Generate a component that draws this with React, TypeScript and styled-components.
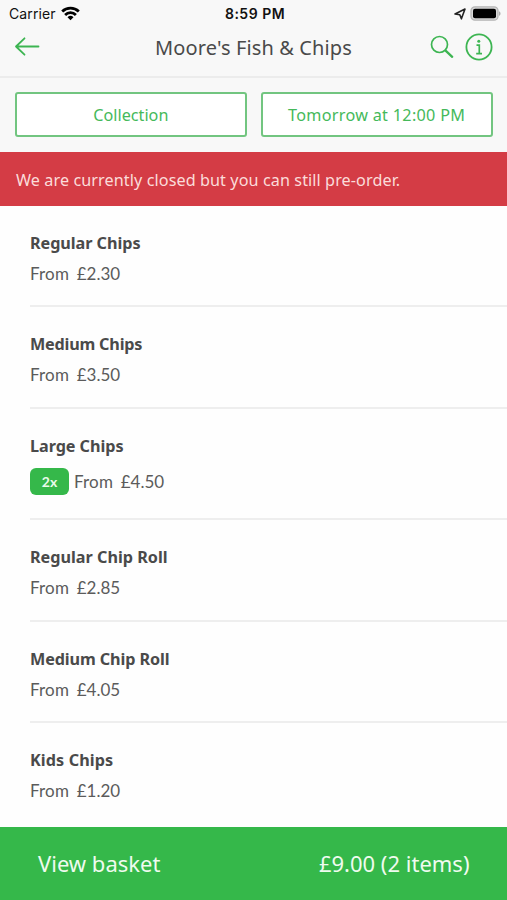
import React from 'react';
import styled, { createGlobalStyle } from 'styled-components';

const green = '#35b84a';
const ink = '#4a4a4a';

const GlobalStyle = createGlobalStyle`
  * { box-sizing: border-box; }
  body {
    margin: 0;
    background: #fefefe;
    color: ${ink};
    font-family: 'Noto Sans', sans-serif;
  }
  button {
    margin: 0;
    padding: 0;
    font: inherit;
    cursor: pointer;
  }
`;

const Screen = styled.div`
  display: flex;
  flex-direction: column;
  width: 507px;
  height: 900px;
  overflow: hidden;
`;

const StatusBar = styled.div`
  display: grid;
  grid-template-columns: 1fr auto 1fr;
  align-items: center;
  height: 27px;
  padding: 0 6px 0 9px;
  background: #f8f8f8;
  color: #111;
  font-family: Inter, sans-serif;
  font-size: 14px;
  line-height: 27px;
`;

const Carrier = styled.div`
  display: flex;
  align-items: center;
  gap: 5px;
  letter-spacing: 0.1px;
`;

const Clock = styled.div`
  font-weight: 600;
  letter-spacing: 0.5px;
`;

const Indicators = styled.div`
  display: flex;
  align-items: center;
  justify-content: flex-end;
  gap: 4px;
`;

const NavBar = styled.header`
  display: grid;
  grid-template-columns: 1fr auto 1fr;
  align-items: center;
  height: 51px;
  padding: 0 14px;
  padding-bottom: 9px;
  background: #f8f8f8;
  border-bottom: 2px solid #ececec;
`;

const Title = styled.h1`
  margin: 0;
  padding-top: 2px;
  font-size: 20px;
  font-weight: 400;
  line-height: 28px;
  letter-spacing: 0.12px;
`;

const Actions = styled.div`
  display: flex;
  align-items: center;
  justify-content: flex-end;
  gap: 11px;
`;

const IconButton = styled.button`
  display: flex;
  border: 0;
  background: none;
  color: #3db552;
`;

const Filters = styled.div`
  display: grid;
  grid-template-columns: 1fr 1fr;
  gap: 14px;
  height: 74px;
  padding: 14px 14.5px 15px 15px;
  background: #f8f8f8;
`;

const FilterButton = styled.button<{ $spacing: number }>`
  border: 2px solid #72c580;
  border-radius: 3px;
  background: #fff;
  color: #45b95a;
  && { font-size: 16.2px; }
  letter-spacing: ${(p) => p.$spacing}px;
`;

const Notice = styled.div`
  height: 54px;
  padding: 0 16px;
  background: #d43c45;
  color: #fbdcda;
  font-size: 16.2px;
  line-height: 56px;
  letter-spacing: 0.08px;
`;

const Menu = styled.main`
  flex: 1;
  min-height: 0;
  overflow: hidden;
`;

const Item = styled.article<{ $tall?: boolean }>`
  display: flex;
  flex-direction: column;
  height: ${(p) => (p.$tall ? 111.4 : 101.4)}px;
  margin-left: 30px;
  padding-top: 25px;
  border-bottom: 2px solid #eee;

  &:last-child {
    border-bottom: 0;
  }
`;

const ItemName = styled.h2<{ $spacing: number }>`
  margin: 0;
  font-size: 16.2px;
  font-weight: 700;
  line-height: 24px;
  letter-spacing: ${(p) => p.$spacing}px;
`;

const PriceLine = styled.div<{ $badged?: boolean }>`
  display: flex;
  align-items: center;
  gap: 5px;
  height: 27px;
  margin-top: ${(p) => (p.$badged ? 10 : 5)}px;
  color: #5b5b5b;
  font-family: Lato, 'Noto Sans', sans-serif;
  font-size: 17px;
`;

const Prefix = styled.span`
  margin-right: 2.5px;
  letter-spacing: 0.2px;
`;

const Price = styled.span``;

const Quantity = styled.span`
  width: 39px;
  height: 27px;
  border-radius: 6px;
  background: ${green};
  color: #eafbea;
  font-size: 14px;
  font-weight: 700;
  line-height: 27px;
  text-align: center;
`;

const Basket = styled.button`
  display: flex;
  align-items: center;
  justify-content: space-between;
  height: 73px;
  border: 0;
  background: ${green};
  color: #effbef;
  && {
    padding: 0 37.5px 2px 38px;
    font-size: 22px;
  }
`;

const items = [
  { name: 'Regular Chips', price: '£2.30', spacing: -0.05 },
  { name: 'Medium Chips', price: '£3.50', spacing: -0.2 },
  { name: 'Large Chips', price: '£4.50', spacing: -0.05, quantity: 2 },
  { name: 'Regular Chip Roll', price: '£2.85', spacing: 0 },
  { name: 'Medium Chip Roll', price: '£4.05', spacing: -0.1 },
  { name: 'Kids Chips', price: '£1.20', spacing: 0.1 },
];

const Wifi = () => (
  <svg width="19" height="15" viewBox="0 0 19 15" fill="none" stroke="#000" strokeWidth="2.8">
    <path d="M1.2 5.4a12 12 0 0 1 16.6 0M4.1 8.9a7.7 7.7 0 0 1 10.8 0" />
    <path d="M9.5 14.2 6.5 11.2a4.3 4.3 0 0 1 6 0Z" fill="#000" stroke="none" />
  </svg>
);

const LocationArrow = () => (
  <svg width="12" height="12" viewBox="0 0 12 12" fill="none" stroke="#222" strokeWidth="1.6" strokeLinejoin="round">
    <path d="M11 1 7.4 10.8 5.8 6.8 1 6Z" />
  </svg>
);

const Battery = () => (
  <svg width="31" height="15" viewBox="0 0 31 15">
    <rect x="1" y="0.8" width="27" height="13.4" rx="4" fill="#d9d9d9" stroke="#b5b5b5" strokeWidth="1.3" />
    <rect x="3" y="2.7" width="23" height="9.6" rx="2" fill="#000" />
    <path d="M29 5.2c2 .8 2 3.8 0 4.6Z" fill="#adadad" />
  </svg>
);

const BackArrow = () => (
  <svg width="26" height="20" viewBox="0 0 26 20" fill="none" stroke="currentColor" strokeWidth="1.8" strokeLinecap="round" strokeLinejoin="round">
    <path d="M24.5 9.5H2M10.5 1.3 2 9.5l8.5 8.2" />
  </svg>
);

const Search = () => (
  <svg width="24" height="24" viewBox="0 0 24 24" fill="none" stroke="currentColor" strokeLinecap="round">
    <circle cx="9.5" cy="9.5" r="8" strokeWidth="1.7" />
    <path d="m15.6 15.6 6.6 6.2" strokeWidth="2.3" />
  </svg>
);

const Info = () => (
  <svg width="28" height="28" viewBox="0 0 28 28" fill="none" stroke="currentColor">
    <circle cx="14" cy="14" r="12.6" strokeWidth="1.8" />
    <circle cx="13.8" cy="8.3" r="1.5" fill="currentColor" stroke="none" />
    <path d="M11.5 12.2h2.8v8.3M11.2 20.6h5.8" strokeWidth="1.7" />
  </svg>
);

export default function App() {
  return (
    <>
      <GlobalStyle />
      <Screen>
        <StatusBar>
          <Carrier>Carrier <Wifi /></Carrier>
          <Clock>8:59 PM</Clock>
          <Indicators><LocationArrow /><Battery /></Indicators>
        </StatusBar>
        <NavBar>
          <IconButton aria-label="Back"><BackArrow /></IconButton>
          <Title>Moore's Fish &amp; Chips</Title>
          <Actions>
            <IconButton aria-label="Search"><Search /></IconButton>
            <IconButton aria-label="Information"><Info /></IconButton>
          </Actions>
        </NavBar>
        <Filters>
          <FilterButton $spacing={0}>Collection</FilterButton>
          <FilterButton $spacing={0.3}>Tomorrow at 12:00 PM</FilterButton>
        </Filters>
        <Notice>We are currently closed but you can still pre-order.</Notice>
        <Menu>
          {items.map((item) => (
            <Item key={item.name} $tall={!!item.quantity}>
              <ItemName $spacing={item.spacing}>{item.name}</ItemName>
              <PriceLine $badged={!!item.quantity}>
                {item.quantity && <Quantity>{item.quantity}x</Quantity>}
                <Prefix>From</Prefix>
                <Price>{item.price}</Price>
              </PriceLine>
            </Item>
          ))}
        </Menu>
        <Basket>
          <span>View basket</span>
          <span>£9.00 (2 items)</span>
        </Basket>
      </Screen>
    </>
  );
}
